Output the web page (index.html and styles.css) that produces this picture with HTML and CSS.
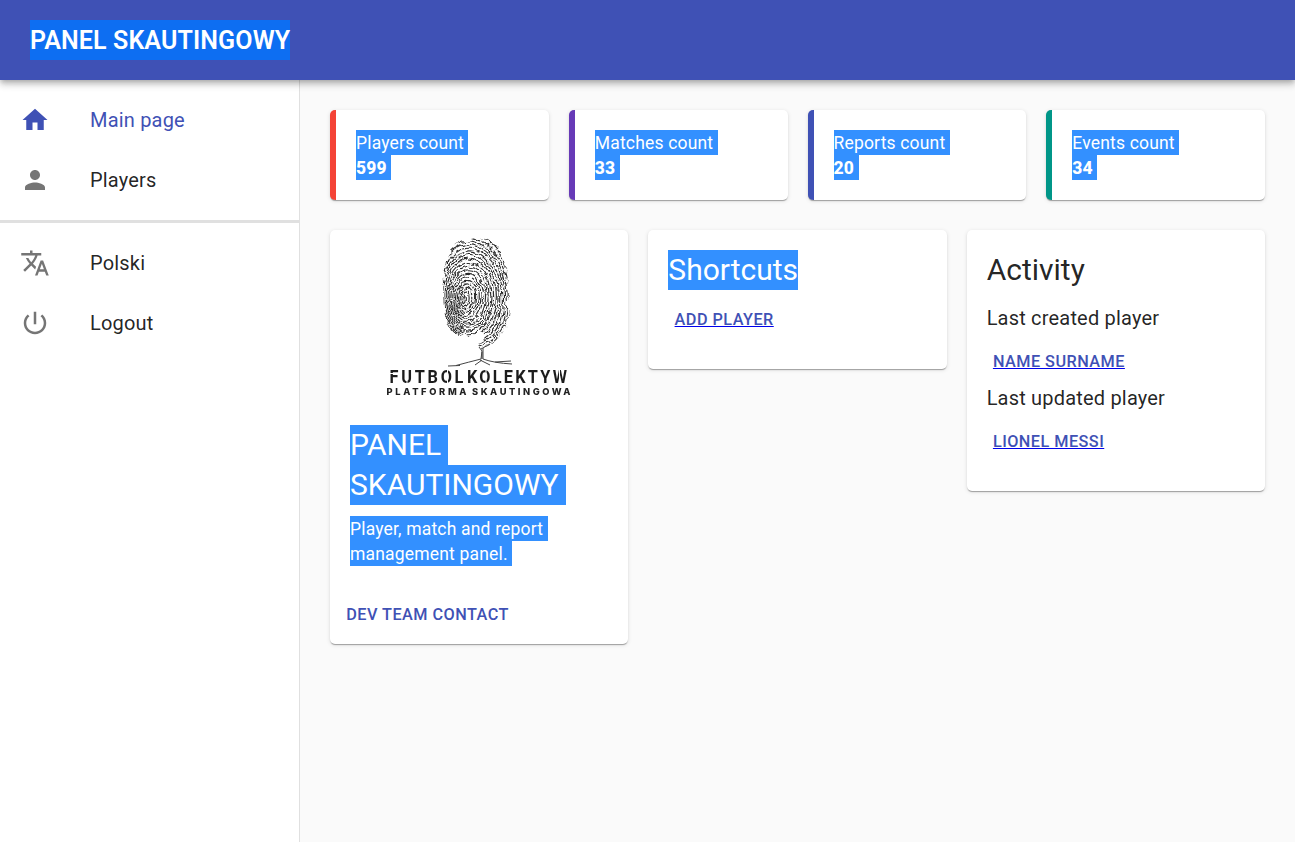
FILE: index.html
```html
<!DOCTYPE html>
<html lang="en">
<head>
<meta charset="utf-8">
<title>Panel skautingowy</title>
<link rel="stylesheet" href="styles.css">
</head>
<body>
<header class="appbar"><h1 class="brand">PANEL SKAUTINGOWY</h1></header>
<div class="shell">
  <nav class="drawer">
    <ul class="menu">
      <li class="item active"><svg class="icon" viewBox="0 0 24 24"><path d="M10 20v-6h4v6h5v-8h3L12 3 2 12h3v8z"/></svg><span>Main page</span></li>
      <li class="item"><svg class="icon" viewBox="0 0 24 24"><path d="M12 12c2.210 0 4-1.790 4-4s-1.790-4-4-4-4 1.790-4 4 1.790 4 4 4zm0 2c-2.670 0-8 1.340-8 4v2h16v-2c0-2.660-5.330-4-8-4z"/></svg><span>Players</span></li>
    </ul>
    <hr class="divider">
    <ul class="menu">
      <li class="item"><svg class="icon" viewBox="0 0 24 24"><path d="M12.870 15.070l-2.540-2.510.030-.030c1.740-1.940 2.980-4.170 3.710-6.530H17V4h-7V2H8v2H1v1.990h11.170C11.500 7.920 10.440 9.750 9 11.350 8.070 10.320 7.300 9.190 6.690 8h-2c.730 1.630 1.730 3.170 2.980 4.560l-5.090 5.020L4 19l5-5 3.110 3.110.760-2.040zM18.500 10h-2L12 22h2l1.120-3h4.750L21 22h2l-4.500-12zm-2.620 7l1.620-4.330L19.120 17h-3.240z"/></svg><span>Polski</span></li>
      <li class="item"><svg class="icon" viewBox="0 0 24 24"><path d="M13 3h-2v10h2V3zm4.830 2.170l-1.420 1.420C17.990 7.860 19 9.810 19 12c0 3.870-3.130 7-7 7s-7-3.130-7-7c0-2.190 1.010-4.140 2.580-5.420L6.170 5.170C4.230 6.820 3 9.260 3 12c0 4.970 4.030 9 9 9s9-4.030 9-9c0-2.740-1.230-5.180-3.170-6.830z"/></svg><span>Logout</span></li>
    </ul>
  </nav>
  <main class="content">
    <section class="stats">
      <article class="card stat red"><p class="mark">Players count</p><p class="mark value">599</p></article>
      <article class="card stat purple"><p class="mark">Matches count</p><p class="mark value">33</p></article>
      <article class="card stat indigo"><p class="mark">Reports count</p><p class="mark value">20</p></article>
      <article class="card stat teal"><p class="mark">Events count</p><p class="mark value">34</p></article>
    </section>
    <section class="panels">
      <article class="card">
        <svg class="logo" viewBox="0 0 298 175">
          <defs>
            <clipPath id="print"><path d="M147 7C136 7 126 12 120 22C114 33 113 51 113.500 69C114 84 117 97 123 103L128 106L134 102L140 106L146 102L156 104L150 112L149 118L158 116L171 107C177 101 178 90 178.500 80L177 73L180 67L177 59L178 43C175 30 167 9 147 7Z"/></clipPath>
            <filter id="rough" x="-10%" y="-10%" width="120%" height="120%"><feTurbulence type="fractalNoise" baseFrequency=".09" numOctaves="3" seed="8"/><feDisplacementMap in="SourceGraphic" scale="8" xChannelSelector="R" yChannelSelector="G"/><feGaussianBlur stdDeviation=".45"/></filter>
            <filter id="soft"><feGaussianBlur stdDeviation=".35"/></filter>
          </defs>
          <g filter="url(#rough)"><g class="ridges" clip-path="url(#print)" id="ridges"></g></g>
          <g class="tree" filter="url(#soft)"><path d="M149 117L152 121L151 129M153 118L153 129M151 129Q139 132 126 135.500M153 129Q164 133 182 134M150 130L160 135M152 130L145 135M165 132L181 131M118 136L130 135.500M151 119L160 114M152 122V129"/></g>
          <g filter="url(#soft)">
            <text class="logo-name" transform="translate(59.500 153.300) scale(.88 1)" textLength="84">FUTBOL</text>
            <text class="logo-name" transform="translate(137 153.300) scale(.88 1)" textLength="113.500">KOLEKTYW</text>
            <path class="stencil" d="M59 143.500H63.500M77 151V154M117.500 140V155M156 140V155M229.500 140V148"/>
            <text class="logo-sub" x="56.500" y="165" textLength="80">PLATFORMA</text>
            <text class="logo-sub" x="142" y="165" textLength="98.500">SKAUTINGOWA</text>
          </g>
        </svg>
        <div class="body intro">
          <h2 class="title"><span class="mark wide">PANEL</span><span class="mark wide">SKAUTINGOWY</span></h2>
          <p class="mark">Player, match and report</p><p class="mark">management panel.</p>
        </div>
        <div class="actions"><span class="button">Dev team contact</span></div>
      </article>
      <article class="card body">
        <h2 class="title shortcuts"><span class="mark tight">Shortcuts</span></h2>
        <a class="button link">Add player</a>
      </article>
      <article class="card body activity">
        <h2 class="title light">Activity</h2>
        <p class="label">Last created player</p>
        <a class="button link">Name Surname</a>
        <p class="label">Last updated player</p>
        <a class="button link">Lionel Messi</a>
      </article>
    </section>
  </main>
</div>
<script src="logo.js"></script>
</body>
</html>
```
FILE: styles.css
```css
* { box-sizing: border-box; margin: 0; padding: 0; }
body { font-family: Roboto, "Liberation Sans", sans-serif; color: rgba(0,0,0,.87); background: #fafafa; font-size: 20px; line-height: 30px; height: 842px; display: flex; flex-direction: column; overflow: hidden; }
.appbar { position: relative; z-index: 1; height: 80px; flex: none; padding: 20px 30px; background: #3f51b5; box-shadow: 0 2px 5px -1px rgba(0,0,0,.2), 0 5px 6px rgba(0,0,0,.14), 0 1px 12px rgba(0,0,0,.12); }
.brand { width: 260px; height: 40px; padding-top: 1px; background: #0d6ef2; color: #fff; font-size: 25px; line-height: 40px; font-weight: 600; white-space: nowrap; letter-spacing: .12px; }
.shell { display: flex; flex: 1; }
.drawer { width: 300px; flex: none; background: #fff; border-right: 1px solid #e0e0e0; }
.menu { list-style: none; padding: 10px 0; }
.item { display: flex; align-items: center; height: 60px; padding: 0 20px; gap: 40px; letter-spacing: .19px; }
.icon { width: 30px; height: 30px; fill: #757575; }
.active { color: #3f51b5; }
.active .icon { fill: #3f51b5; }
.divider { height: 3px; border: 0; background: #e0e0e0; }
.content { flex: 1; padding: 30px; display: flex; flex-direction: column; gap: 30px; }
.stats { display: grid; grid-template-columns: repeat(4, 1fr); gap: 20px; }
.panels { display: grid; grid-template-columns: repeat(3, 1fr); gap: 20px; align-items: start; }
.card { background: #fff; border-radius: 5px; box-shadow: 0 2px 1px -1px rgba(0,0,0,.2), 0 1px 1px rgba(0,0,0,.14), 0 1px 4px rgba(0,0,0,.12); }
.stat { padding: 20px; border-left: 6px solid; }
.red { border-color: #f44336; }
.purple { border-color: #673ab7; }
.indigo { border-color: #3f51b5; }
.teal { border-color: #009688; }
.mark { display: block; width: fit-content; height: 25px; white-space: nowrap; background: #3390ff; color: #fff; font-size: 17.5px; line-height: 27px; letter-spacing: .18px; padding-right: 4.500px; }
.value { font-weight: 800; }
.title { font-size: 30px; line-height: 40px; font-weight: 400; }
.title .mark { height: 40px; font-size: inherit; line-height: inherit; letter-spacing: 0; }
.title .wide { padding-right: 7px; }
.title .tight { padding-right: 0; }
.body { padding: 20px 20px 30px; }
.intro { padding-bottom: 20px; }
.intro .title { margin-bottom: 11px; }
.actions { padding: 10px; }
.button { display: block; width: fit-content; padding: 5px 6.250px; font-size: 16.250px; line-height: 28.400px; font-weight: 500; letter-spacing: .464px; text-transform: uppercase; color: #3f51b5; }
.link { text-decoration: underline; text-decoration-color: #0000ee; }
.shortcuts { margin-bottom: 11px; }
.light { margin-bottom: 13px; }
.label { letter-spacing: .19px; }
.activity .link { margin-top: 10px; }
.activity .link + .label { margin-top: 1.600px; }
.logo { display: block; width: 298px; height: 175px; }
.ridges { fill: none; stroke: #2c2c2c; stroke-width: 1.150; }
.tree { fill: none; stroke: #444; stroke-width: 1; }
.logo-name { font: 700 18.500px Roboto, sans-serif; fill: #1c1c1c; }
.logo-sub { font: 800 9.300px Inter, sans-serif; fill: #222; }
.stencil { stroke: #fff; stroke-width: 1; }
```
FILE: logo.js
```js
// Draws the concentric ridges of the fingerprint.
const ridges = document.getElementById('ridges');
for (let i = 0; i < 28; i++) {
  const e = document.createElementNS('http://www.w3.org/2000/svg', 'ellipse');
  const r = 1.2 + i * 2.3;
  e.setAttribute('cx', 135 + i * 0.45);
  e.setAttribute('cy', 69 - i * 0.3);
  e.setAttribute('rx', r);
  e.setAttribute('ry', r * 1.4 + 3);
  e.setAttribute('stroke-dasharray', `${9 + (i * 7) % 13} 1.2 ${5 + (i * 5) % 9} .8`);
  e.setAttribute('transform', `rotate(${8 - i * 0.9} 135 69)`);
  ridges.appendChild(e);
}
```
